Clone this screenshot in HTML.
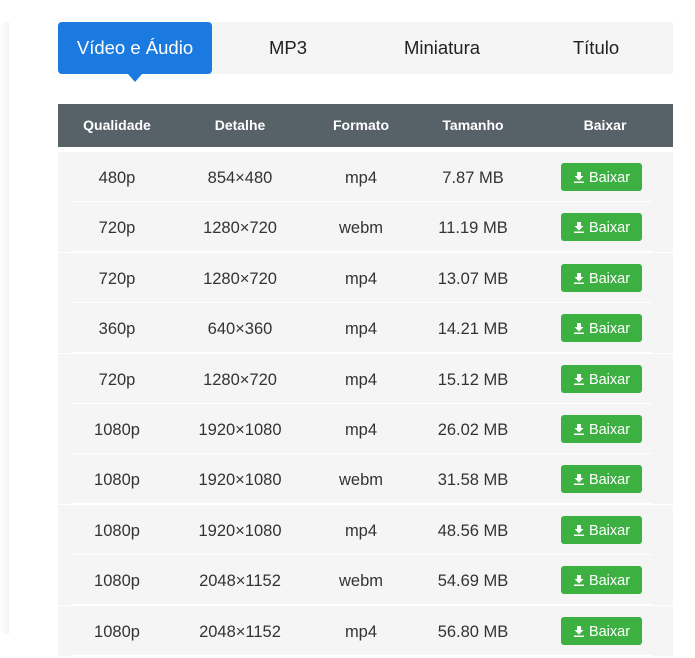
<!DOCTYPE html>
<html><head><meta charset="utf-8"><style>
body{margin:0;width:695px;height:652px;background:#fff;font-family:"Liberation Sans",sans-serif;position:relative;overflow:hidden}
.sh{position:absolute;left:0;top:22px;width:9px;height:612px;background:linear-gradient(90deg,#fff,#f3f4f6);}
.tabs{position:absolute;left:58px;top:22px;width:615px;height:52px;background:#f5f5f5}
.tab{position:absolute;top:0;height:52px;line-height:52px;font-size:18.5px;color:#222;text-align:center}
.act{left:0;width:154px;background:#1a7ae0;color:#fff;border-radius:4px}
.act:after{content:"";position:absolute;left:70px;top:52px;border-left:7px solid transparent;border-right:7px solid transparent;border-top:8px solid #1a7ae0}
.hd{position:absolute;left:58px;top:104px;width:615px;height:43px;background:#566168;color:#fff;font-size:14px;font-weight:bold}
.c{position:absolute;width:120px;margin-left:-60px;text-align:center}
.hd .c{top:0;line-height:43px}
.row{position:absolute;left:58px;width:615px;height:50px;background:#f5f5f5;font-size:16.5px;color:#333}
.row:after{content:"";position:absolute;left:14px;right:21px;bottom:0;height:1px;background:#fff}
.row .c{line-height:52px}
.btn{position:absolute;left:503px;top:11px;width:81px;height:28px;background:#3db042;border-radius:3px;color:#fff;font-size:14.5px;line-height:31px;text-align:center}
</style></head><body>
<div class="sh"></div>
<div class="tabs">
<div class="tab act">Vídeo e Áudio</div>
<div class="tab" style="left:170px;width:120px">MP3</div>
<div class="tab" style="left:324px;width:120px">Miniatura</div>
<div class="tab" style="left:478px;width:120px">Título</div>
</div>
<div class="hd">
<div class="c" style="left:59px">Qualidade</div>
<div class="c" style="left:182px">Detalhe</div>
<div class="c" style="left:303px">Formato</div>
<div class="c" style="left:415px">Tamanho</div>
<div class="c" style="left:547px">Baixar</div>
</div>
<div id="rows"></div>
<script>
var d=[["480p","854×480","mp4","7.87 MB"],["720p","1280×720","webm","11.19 MB"],["720p","1280×720","mp4","13.07 MB"],["360p","640×360","mp4","14.21 MB"],["720p","1280×720","mp4","15.12 MB"],["1080p","1920×1080","mp4","26.02 MB"],["1080p","1920×1080","webm","31.58 MB"],["1080p","1920×1080","mp4","48.56 MB"],["1080p","2048×1152","webm","54.69 MB"],["1080p","2048×1152","mp4","56.80 MB"]];
var h="",L=[59,182,303,415];
d.forEach(function(r,i){h+='<div class="row" style="top:'+(152+i*50.4)+'px">';r.forEach(function(t,j){h+='<div class="c" style="left:'+L[j]+'px">'+t+'</div>'});h+='<div class="btn"><svg width="12" height="12" viewBox="0 0 12 12" style="vertical-align:-1px"><path d="M4 1h4v4h2.5L6 9.5 1.5 5H4z" fill="#fff"/><rect x="1" y="10.5" width="10" height="1.5" fill="#fff"/></svg> Baixar</div></div>'});
document.getElementById("rows").innerHTML=h;
</script>
</body></html>
